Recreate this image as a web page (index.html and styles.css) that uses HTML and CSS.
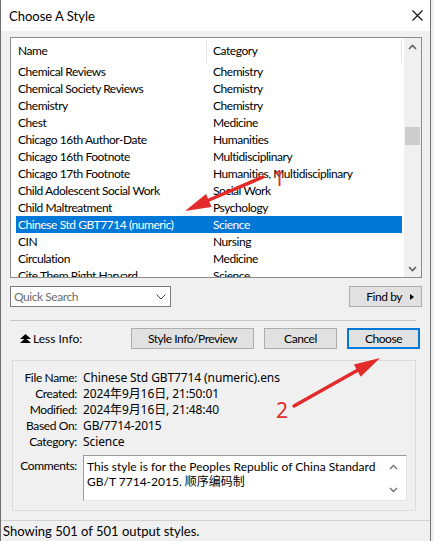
FILE: index.html
```html
<!DOCTYPE html>
<html>
<head>
<meta charset="utf-8">
<link rel="stylesheet" href="styles.css">
</head>
<body>
<div class="page">
  <div class="win">
    <div class="titlebar">
      <span class="title">Choose A Style</span>
      <svg class="close" width="11" height="11" viewBox="0 0 11 11"><path d="M0.5 0.5L10.5 10.5M10.5 0.5L0.5 10.5" stroke="#111" stroke-width="1.1" fill="none"/></svg>
    </div>
    <div class="body">
      <div class="list">
        <div class="list-main">
          <div class="hdr">
            <div class="c1">Name</div>
            <div class="c2">Category</div>
          </div>
          <div class="row"><div class="c1">Chemical Reviews</div><div class="c2">Chemistry</div></div>
          <div class="row"><div class="c1">Chemical Society Reviews</div><div class="c2">Chemistry</div></div>
          <div class="row"><div class="c1">Chemistry</div><div class="c2">Chemistry</div></div>
          <div class="row"><div class="c1">Chest</div><div class="c2">Medicine</div></div>
          <div class="row"><div class="c1">Chicago 16th Author-Date</div><div class="c2">Humanities</div></div>
          <div class="row"><div class="c1">Chicago 16th Footnote</div><div class="c2">Multidisciplinary</div></div>
          <div class="row"><div class="c1">Chicago 17th Footnote</div><div class="c2">Humanities, Multidisciplinary</div></div>
          <div class="row"><div class="c1">Child Adolescent Social Work</div><div class="c2">Social Work</div></div>
          <div class="row"><div class="c1">Child Maltreatment</div><div class="c2">Psychology</div></div>
          <div class="row sel"><div class="c1">Chinese Std GBT7714 (numeric)</div><div class="c2">Science</div></div>
          <div class="row"><div class="c1">CIN</div><div class="c2">Nursing</div></div>
          <div class="row"><div class="c1">Circulation</div><div class="c2">Medicine</div></div>
          <div class="row"><div class="c1">Cite Them Right Harvard</div><div class="c2">Science</div></div>
        </div>
        <div class="vscroll">
          <div class="sbtn"><svg width="9" height="6" viewBox="0 0 9 6"><path d="M1 5L4.5 1.5L8 5" stroke="#606060" stroke-width="1.6" fill="none"/></svg></div>
          <div class="track"><div class="thumb"></div></div>
          <div class="sbtn"><svg width="9" height="6" viewBox="0 0 9 6"><path d="M1 1L4.5 4.5L8 1" stroke="#606060" stroke-width="1.6" fill="none"/></svg></div>
        </div>
      </div>

      <div class="search-row">
        <div class="combo">
          <span class="placeholder">Quick Search</span>
          <svg width="10" height="6" viewBox="0 0 10 6"><path d="M0.5 0.5L5 5L9.5 0.5" stroke="#444" stroke-width="1" fill="none"/></svg>
        </div>
        <div class="btn findby">
          <span>Find by</span>
          <svg width="4" height="6" viewBox="0 0 4 6"><path d="M0 0L4 3L0 6Z" fill="#000"/></svg>
        </div>
      </div>

      <div class="sep"></div>

      <div class="btn-row">
        <div class="less">
          <svg width="11" height="10" viewBox="0 0 11 10"><path d="M5.5 0L11 5H0Z M5.5 4L11 9H0Z" fill="#000"/></svg>
          <span>Less Info:</span>
        </div>
        <div class="btns">
          <div class="btn w-info">Style Info/Preview</div>
          <div class="btn w-sm">Cancel</div>
          <div class="btn w-sm def">Choose</div>
        </div>
      </div>

      <div class="info">
        <div class="grid">
          <div class="lbl">File Name:</div><div class="val">Chinese Std GBT7714 (numeric).ens</div>
          <div class="lbl">Created:</div><div class="val">2024年9月16日, 21:50:01</div>
          <div class="lbl">Modified:</div><div class="val">2024年9月16日, 21:48:40</div>
          <div class="lbl">Based On:</div><div class="val">GB/7714-2015</div>
          <div class="lbl">Category:</div><div class="val">Science</div>
        </div>
        <div class="comments">
          <div class="lbl clbl">Comments:</div>
          <div class="textarea">
            <div class="ttext">This style is for the Peoples Republic of China Standard GB/T 7714-2015. 顺序编码制</div>
            <div class="tscroll">
              <svg width="9" height="6" viewBox="0 0 9 6"><path d="M1 5L4.5 1.5L8 5" stroke="#707070" stroke-width="1.4" fill="none"/></svg>
              <svg width="9" height="6" viewBox="0 0 9 6"><path d="M1 1L4.5 4.5L8 1" stroke="#707070" stroke-width="1.4" fill="none"/></svg>
            </div>
          </div>
        </div>
      </div>
    </div>
    <div class="status">Showing 501 of 501 output styles.</div>
  </div>

  <svg class="annot" width="434" height="541" viewBox="0 0 434 541">
    <line x1="263" y1="177" x2="209" y2="200" stroke="#e42b2b" stroke-width="3.5" stroke-linecap="round"/>
    <path d="M185 211L211.6 206.9L206 194.1Z" fill="#e42b2b"/>
    <text x="273" y="186" class="anum">1</text>
    <line x1="294" y1="406" x2="358" y2="370" stroke="#e42b2b" stroke-width="3.5" stroke-linecap="round"/>
    <path d="M380 358L360.7 376.8L353.9 364.6Z" fill="#e42b2b"/>
    <text x="276" y="418" class="anum">2</text>
  </svg>
</div>
</body>
</html>
```
FILE: styles.css
```css
* { box-sizing: border-box; }
html, body { margin: 0; padding: 0; }
body {
  background: #f0f0f0;
  font-family: "Lato", "Noto Sans CJK SC", sans-serif;
  font-size: 12px;
  letter-spacing: -0.45px;
  color: #000;
}
.page { position: relative; width: 434px; height: 541px; overflow: hidden; }
.win {
  width: 431px;
  height: 541px;
  border-left: 1px solid #6f6f6f;
  border-right: 1px solid #6f6f6f;
  display: flex;
  flex-direction: column;
  background: #f0f0f0;
}
.titlebar {
  height: 31px;
  flex: none;
  background: #fff;
  display: flex;
  align-items: center;
  justify-content: space-between;
  padding: 0 7px 0 8px;
}
.title { font-size: 13px; letter-spacing: 0; color: #000; }
.body { flex: 1; padding: 6px 9px 0 9px; }

/* list */
.list {
  width: 412px;
  height: 241px;
  border: 1px solid #8b8b8b;
  background: #fff;
  display: flex;
  overflow: hidden;
}
.list-main { flex: 1; padding-left: 5px; overflow: hidden; }
.hdr { height: 25px; display: flex; padding-top: 2px; }
.hdr .c1, .hdr .c2 { display: flex; align-items: center; padding-bottom: 2px; }
.hdr .c1 { border-right: 1px solid #e5e5e5; }
.hdr .c2 { border-right: 1px solid #e5e5e5; }
.c1 { width: 191px; padding-left: 2px; white-space: nowrap; flex: none; }
.c2 { width: 195px; padding-left: 6px; white-space: nowrap; flex: none; }
.row { height: 17px; display: flex; align-items: center; width: 386px; }
.row.sel { background: #0078d7; color: #fff; }

.vscroll { width: 17px; flex: none; background: #f0f0f0; display: flex; flex-direction: column; }
.sbtn { height: 17px; display: flex; align-items: center; justify-content: center; flex: none; }
.track { flex: 1; padding: 72px 1px 0 1px; }
.thumb { height: 18px; background: #cdcdcd; }

/* search row */
.search-row { margin-top: 8px; height: 21px; display: flex; justify-content: space-between; width: 412px; }
.combo {
  width: 161px;
  height: 21px;
  border: 1px solid #7a7a7a;
  background: #fff;
  display: flex;
  align-items: center;
  justify-content: space-between;
  padding: 0 4px 0 3px;
}
.placeholder { color: #6d6d6d; }
.btn {
  height: 21px;
  background: #e1e1e1;
  border: 1px solid #adadad;
  display: flex;
  align-items: center;
  justify-content: center;
}
.findby { width: 73px; justify-content: flex-end; gap: 8px; padding-right: 7px; }

.sep { margin-top: 13px; width: 406px; border-top: 1px solid #c6c6c6; }

.btn-row { margin-top: 7px; height: 21px; display: flex; align-items: center; justify-content: space-between; width: 412px; padding-right: 2px; }
.less { display: flex; align-items: center; gap: 2px; padding-left: 10px; letter-spacing: 0; }
.btns { display: flex; gap: 10px; }
.w-info { width: 123px; }
.w-sm { width: 73px; }
.btn.def { border: 2px solid #0078d7; }

/* info */
.info {
  margin: 11px 0 0 2px;
  width: 404px;
  height: 151px;
  border: 1px solid #dcdcdc;
  padding: 9px 0 0 0;
}
.grid { display: grid; grid-template-columns: 64px auto; column-gap: 6px; line-height: 16px; }
.lbl { text-align: right; white-space: nowrap; letter-spacing: -0.35px; }
.val { white-space: nowrap; font-family: "Noto Sans", "Noto Sans CJK SC", sans-serif; letter-spacing: -0.1px; }
.comments { display: flex; margin-top: 5px; gap: 6px; }
.clbl { width: 64px; padding-top: 3px; line-height: 15px; }
.textarea {
  width: 324px;
  height: 46px;
  background: #fff;
  border-top: 1px solid #9a9a9a;
  border-left: 1px solid #9a9a9a;
  border-right: 1px solid #e3e3e3;
  border-bottom: 1px solid #e3e3e3;
  display: flex;
}
.ttext { flex: 1; padding: 3px 0 0 3px; line-height: 15px; letter-spacing: 0; }
.tscroll { width: 25px; flex: none; display: flex; flex-direction: column; justify-content: space-between; align-items: center; padding: 8px 0 7px 0; }

.status {
  height: 21px;
  flex: none;
  border-top: 1px solid #d0d0d0;
  padding-left: 2px;
  font-size: 13px;
  letter-spacing: 0;
  display: flex;
  align-items: center;
}

.annot { position: absolute; left: 0; top: 0; pointer-events: none; }
.anum { fill: #e42b2b; font-family: "Noto Sans", sans-serif; font-size: 21px; letter-spacing: 0; }
```
